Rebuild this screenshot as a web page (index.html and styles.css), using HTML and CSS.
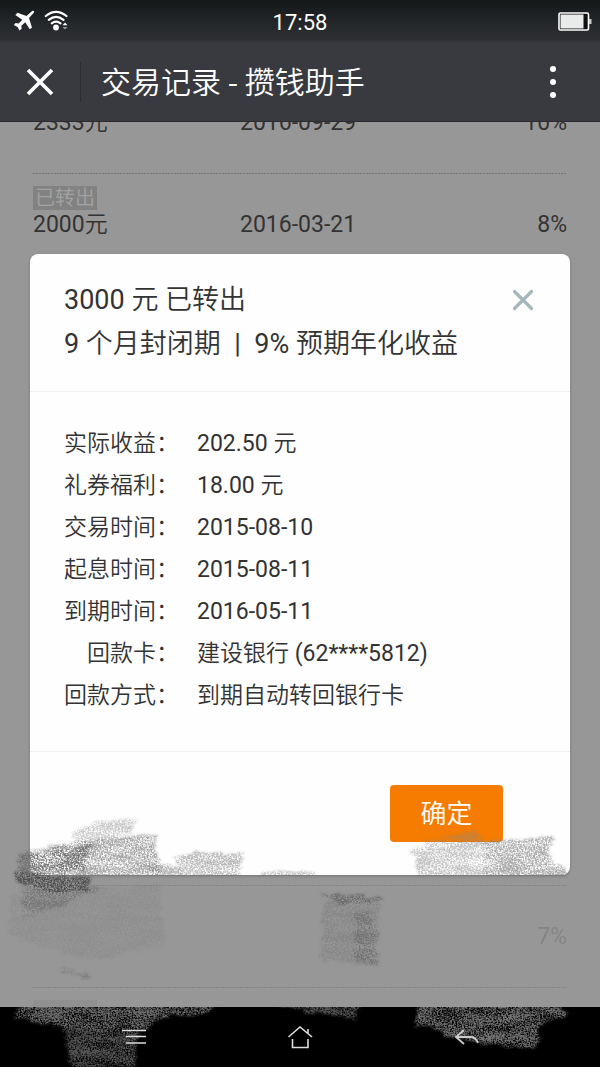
FILE: index.html
```html
<!DOCTYPE html>
<html lang="zh-CN">
<head>
<meta charset="utf-8">
<meta name="viewport" content="width=device-width, initial-scale=1">
<title>交易记录 - 攒钱助手</title>
<link rel="stylesheet" href="styles.css">
</head>
<body>
<div class="screen">
  <header class="top">
    <div class="status">
      <div class="status-icons">
        <svg width="22" height="22" viewBox="0 0 22 22" fill="#fff" aria-hidden="true"><path d="M19.500 .8Q21.800 .2 21 2.600L16 8.100L19 17.500L16.800 19.300L12.200 12.200L8.400 15.700L8.600 18.800L6.500 20.500L4.600 17L.8 15L2.600 13L5.700 13.400L9.300 9.800L2.300 5L4.500 2.800L13.500 5.900Z"/></svg>
        <svg width="25" height="22" viewBox="0 0 25 22" fill="none" stroke="#fff" stroke-width="2.200" stroke-linecap="round" aria-hidden="true"><path d="M1.800 6Q12 -2.200 22.500 6M4.800 9.800Q12 3.800 19.500 9.800M7.800 13.300Q12 9.800 16.500 13.300"/><circle cx="12" cy="17.500" r="2.900" fill="#fff" stroke="none"/><path d="M18.500 15.200L21 12.500L23.500 15.200Z" fill="#fff" stroke="none"/><path d="M18.500 17L21 19.500L23.500 17Z" fill="#999" stroke="none"/></svg>
      </div>
      <time class="clock">17:58</time>
      <div class="battery">
        <svg width="34" height="19" viewBox="0 0 34 19" aria-hidden="true"><rect x="1" y="1" width="29.500" height="17" rx="1.500" fill="#111" stroke="#fff" stroke-width="1.600"/><rect x="2.500" y="2.500" width="23" height="14" fill="#e8ebe9"/><rect x="31" y="7" width="2.500" height="5" fill="#ccc"/></svg>
      </div>
    </div>
    <div class="titlebar">
      <button class="icon-btn close-page" aria-label="关闭页面"><svg width="28" height="28" viewBox="0 0 28 28" stroke="#fff" stroke-width="3.600"><path d="M2 2L26 26M26 2L2 26"/></svg></button>
      <h1 class="title">交易记录 - 攒钱助手</h1>
      <button class="icon-btn more" aria-label="更多"><svg width="8" height="34" viewBox="0 0 8 34" fill="#fff"><circle cx="4" cy="4" r="3"/><circle cx="4" cy="17" r="3"/><circle cx="4" cy="30" r="3"/></svg></button>
    </div>
  </header>

  <main class="content">
    <div class="records">
      <div class="record first"><span>2333元</span><span>2016-09-29</span><span>10%</span></div>
      <div class="record"><b class="tag">已转出</b><span>2000元</span><span>2016-03-21</span><span>8%</span></div>
      <div class="spacer"></div>
      <div class="record faded"><span class="rate">7%</span></div>
      <div class="record last faded"><b class="tag"></b></div>
    </div>

    <section class="dialog" role="dialog" aria-labelledby="dialog-title">
      <div class="dialog-head">
        <h2 class="dialog-title" id="dialog-title">3000 元 已转出<br>9 个月封闭期 &nbsp;|&nbsp; 9% 预期年化收益</h2>
        <button class="icon-btn close-dialog" aria-label="关闭"><svg width="22" height="22" viewBox="0 0 22 22" stroke="#a5b7bc" stroke-width="3.200" stroke-linecap="round"><path d="M2.500 2.500L19.500 19.500M19.500 2.500L2.500 19.500"/></svg></button>
      </div>
      <dl class="details">
        <dt>实际收益：</dt><dd>202.50 元</dd>
        <dt>礼券福利：</dt><dd>18.00 元</dd>
        <dt>交易时间：</dt><dd>2015-08-10</dd>
        <dt>起息时间：</dt><dd>2015-08-11</dd>
        <dt>到期时间：</dt><dd>2016-05-11</dd>
        <dt>回款卡：</dt><dd>建设银行 (62****5812)</dd>
        <dt>回款方式：</dt><dd>到期自动转回银行卡</dd>
      </dl>
      <div class="dialog-foot"><button class="confirm">确定</button></div>
    </section>
  </main>

  <svg class="smudges" viewBox="0 0 600 1067" preserveAspectRatio="none" aria-hidden="true">
    <defs>
      <clipPath id="card"><rect x="0" y="780" width="600" height="95"/></clipPath>
      <clipPath id="list"><rect x="0" y="780" width="600" height="227"/></clipPath>
      <clipPath id="bar"><rect x="0" y="1007" width="600" height="60"/></clipPath>
      <filter id="chalk" filterUnits="userSpaceOnUse" x="0" y="780" width="600" height="287" color-interpolation-filters="sRGB">
        <feTurbulence type="fractalNoise" baseFrequency="0.06 0.25" numOctaves="3" seed="4" result="wave"/>
        <feDisplacementMap in="SourceGraphic" in2="wave" scale="12" xChannelSelector="R" yChannelSelector="G" result="rough"/>
        <feGaussianBlur in="rough" stdDeviation="1" result="shape"/>
        <feTurbulence type="fractalNoise" baseFrequency="0.59 0.67" numOctaves="3" seed="9" result="fine"/>
        <feTurbulence type="fractalNoise" baseFrequency="0.03 0.12" numOctaves="2" seed="21" result="coarse"/>
        <feComposite in="fine" in2="coarse" operator="arithmetic" k2="0.85" k3="0.35" result="grain"/>
        <feColorMatrix in="grain" type="matrix" values="0 0 0 0 0  0 0 0 0 0  0 0 0 0 0  0 0 0 3 -1.2" result="mask"/>
        <feComposite in="shape" in2="mask" operator="in"/>
      </filter>
    </defs>
    <g clip-path="url(#card)"><g filter="url(#chalk)" fill="#888">
      <path opacity=".45" d="M70 833L88 824L140 818L132 830L110 840L80 845Z"/>
      <path opacity=".75" d="M88 840L158 833L155 846L158 860L165 880H28V852Z"/>
      <path opacity=".6" d="M174 858L194 852L246 853L240 862V880H150V863L180 864Z"/>
      <path opacity=".5" d="M262 873L280 870L315 872V880H255Z"/>
      <path opacity=".5" d="M411 850L430 840L476 830L484 842V880H418L416 860Z"/>
      <path opacity=".7" d="M484 841L555 837L548 850L552 860L566 869V880H484Z"/>
    </g></g>
    <g clip-path="url(#list)"><g filter="url(#chalk)" fill="#444">
      <path opacity=".5" d="M18 856L90 844L84 870H18Z"/>
      <path opacity=".9" d="M14 870L34 874L90 879L84 893L48 892L16 882Z"/>
      <path opacity=".3" d="M84 889L111 887L84 895L58 908L24 918L20 885Z"/>
      <path opacity=".1" d="M10 895L160 885L165 945L88 960L10 935Z"/>
      <path opacity=".55" d="M318 895L340 893L386 899L375 903L340 902Z"/>
      <path opacity=".2" d="M324 900L380 900L376 965L320 960Z"/>
      <path opacity=".3" d="M355 912L372 912L378 964H355Z"/>
      <path opacity=".3" d="M62 968L90 974L86 978L60 972Z"/>
    </g></g>
    <g clip-path="url(#bar)"><g filter="url(#chalk)" fill="#777">
      <path opacity=".9" d="M14 1018L24 1000H222L205 1013L160 1019L145 1030L45 1024Z"/>
      <path opacity=".7" d="M63 1024H138L136 1080H74Z"/>
      <path opacity=".7" d="M254 1000H360L356 1020L310 1011Z"/>
      <path opacity=".95" d="M420 1000H560L568 1018L542 1023L535 1049L475 1043L444 1036L440 1027L414 1028Z"/>
    </g></g>
  </svg>

  <nav class="navbar">
    <button class="icon-btn nav-btn" aria-label="菜单"><svg width="32" height="24" viewBox="0 0 32 24" stroke="#ddd" stroke-width="1.600"><path d="M4 5.500H28M8 11.500H28M8 18H28"/></svg></button>
    <button class="icon-btn nav-btn" aria-label="主页"><svg width="32" height="24" viewBox="0 0 32 24" fill="none" stroke="#ddd" stroke-width="1.600"><path d="M4.500 12L16 2L28 12M24 8V4M8.500 14V22.500H24V14"/></svg></button>
    <button class="icon-btn nav-btn" aria-label="返回"><svg width="32" height="24" viewBox="0 0 32 24" fill="none" stroke="#ccc" stroke-width="1.800"><path d="M14 5L6 12L14 19M6 12H21Q26 12.500 28 18"/></svg></button>
  </nav>
</div>
</body>
</html>
```
FILE: styles.css
```css
* { box-sizing: border-box; }
body {
  margin: 0;
  background: #000;
  color: #333;
  font-family: Roboto, "Noto Sans CJK SC DemiLight", "Noto Sans CJK SC", sans-serif;
}
h1, h2, dl, dd { margin: 0; font-weight: 400; }
.screen {
  position: relative;
  display: flex;
  flex-direction: column;
  height: 100vh;
  overflow: hidden;
}
.icon-btn {
  display: flex;
  align-items: center;
  justify-content: center;
  padding: 0;
  border: 0;
  background: none;
}
.top { flex: none; color: #fff; background: #393a3f; border-bottom: 1px solid #2c2d30; }
.status {
  display: grid;
  grid-template-columns: 1fr auto 1fr;
  align-items: center;
  height: 42px;
  padding: 0 8px;
  background: linear-gradient(#151819, #303236);
}
.status-icons { display: flex; gap: 9px; padding-left: 5px; }
.clock { padding-top: 4px; font-size: 22px; line-height: 38px; }
.battery { display: flex; justify-content: flex-end; }
.titlebar { display: flex; align-items: center; height: 79px; padding-right: 43px; }
.close-page { width: 81px; height: 40px; border-right: 1px solid #2c2d31; }
.title {
  flex: 1;
  padding: 0 0 4px 20px;
  font-family: "Noto Sans CJK SC", sans-serif;
  font-size: 30px;
  font-weight: 350;
  white-space: nowrap;
}
.content {
  position: relative;
  flex: 1;
  display: grid;
  align-items: center;
  min-height: 0;
  padding: 0 30px;
  background: #979797;
  overflow: hidden;
}
.records {
  position: absolute;
  inset: 0 33px;
  display: flex;
  flex-direction: column;
  font-size: 23px;
  line-height: 28px;
}
.record {
  flex: none;
  display: grid;
  grid-template-columns: 207px 1fr auto;
  grid-template-rows: 25px 28px;
  align-content: start;
  height: 102px;
  padding-top: 13px;
  background: repeating-linear-gradient(90deg, #777 0 2px, #979797 2px 3px) top / 100% 1px no-repeat;
}
.record span { grid-row: 2; }
.record.first { margin-top: -51px; background: none; }
.record .rate { grid-column: 3; }
.record.last { height: 20px; }
.tag {
  grid-area: 1 / 1;
  justify-self: start;
  min-width: 64px;
  height: 24px;
  padding: 0 2px;
  background: #828282;
  color: #a2a2a2;
  font-size: 20px;
  font-weight: 350;
  line-height: 24px;
}
.faded { opacity: .6; }
.faded .rate { opacity: .3; }
.faded .tag { opacity: .5; }
.spacer { flex: 1; }
.dialog {
  position: relative;
  background: #fefefe;
  border-radius: 8px;
  box-shadow: 0 1px 3px rgba(0, 0, 0, .25);
}
.dialog-head {
  display: flex;
  justify-content: space-between;
  align-items: flex-start;
  padding: 24px 32px 25px 34px;
  border-bottom: 1px solid #eee;
}
.dialog-title { font-size: 27px; line-height: 44px; }
.close-dialog { width: 30px; height: 44px; }
.details {
  display: grid;
  grid-template-columns: 115px 1fr;
  column-gap: 18px;
  padding: 31px 34px 34px;
  border-bottom: 1px solid #eee;
  font-size: 23px;
  line-height: 42px;
}
.details dt { font-weight: 350; text-align: right; white-space: nowrap; }
.dialog-foot { display: flex; justify-content: flex-end; padding: 33px 67px; }
.confirm {
  width: 113px;
  height: 57px;
  padding: 0 0 4px;
  border: 0;
  border-radius: 4px;
  background: #f57c00;
  color: #fff;
  font: 350 26px "Noto Sans CJK SC", sans-serif;
}
.smudges {
  position: absolute;
  inset: 0;
  width: 100%;
  height: 100%;
  z-index: 1;
  pointer-events: none;
}
.navbar {
  flex: none;
  display: flex;
  align-items: center;
  justify-content: space-between;
  height: 60px;
  padding: 0 118px;
  background: #000;
}
.nav-btn { position: relative; z-index: 2; width: 32px; height: 48px; }
```
